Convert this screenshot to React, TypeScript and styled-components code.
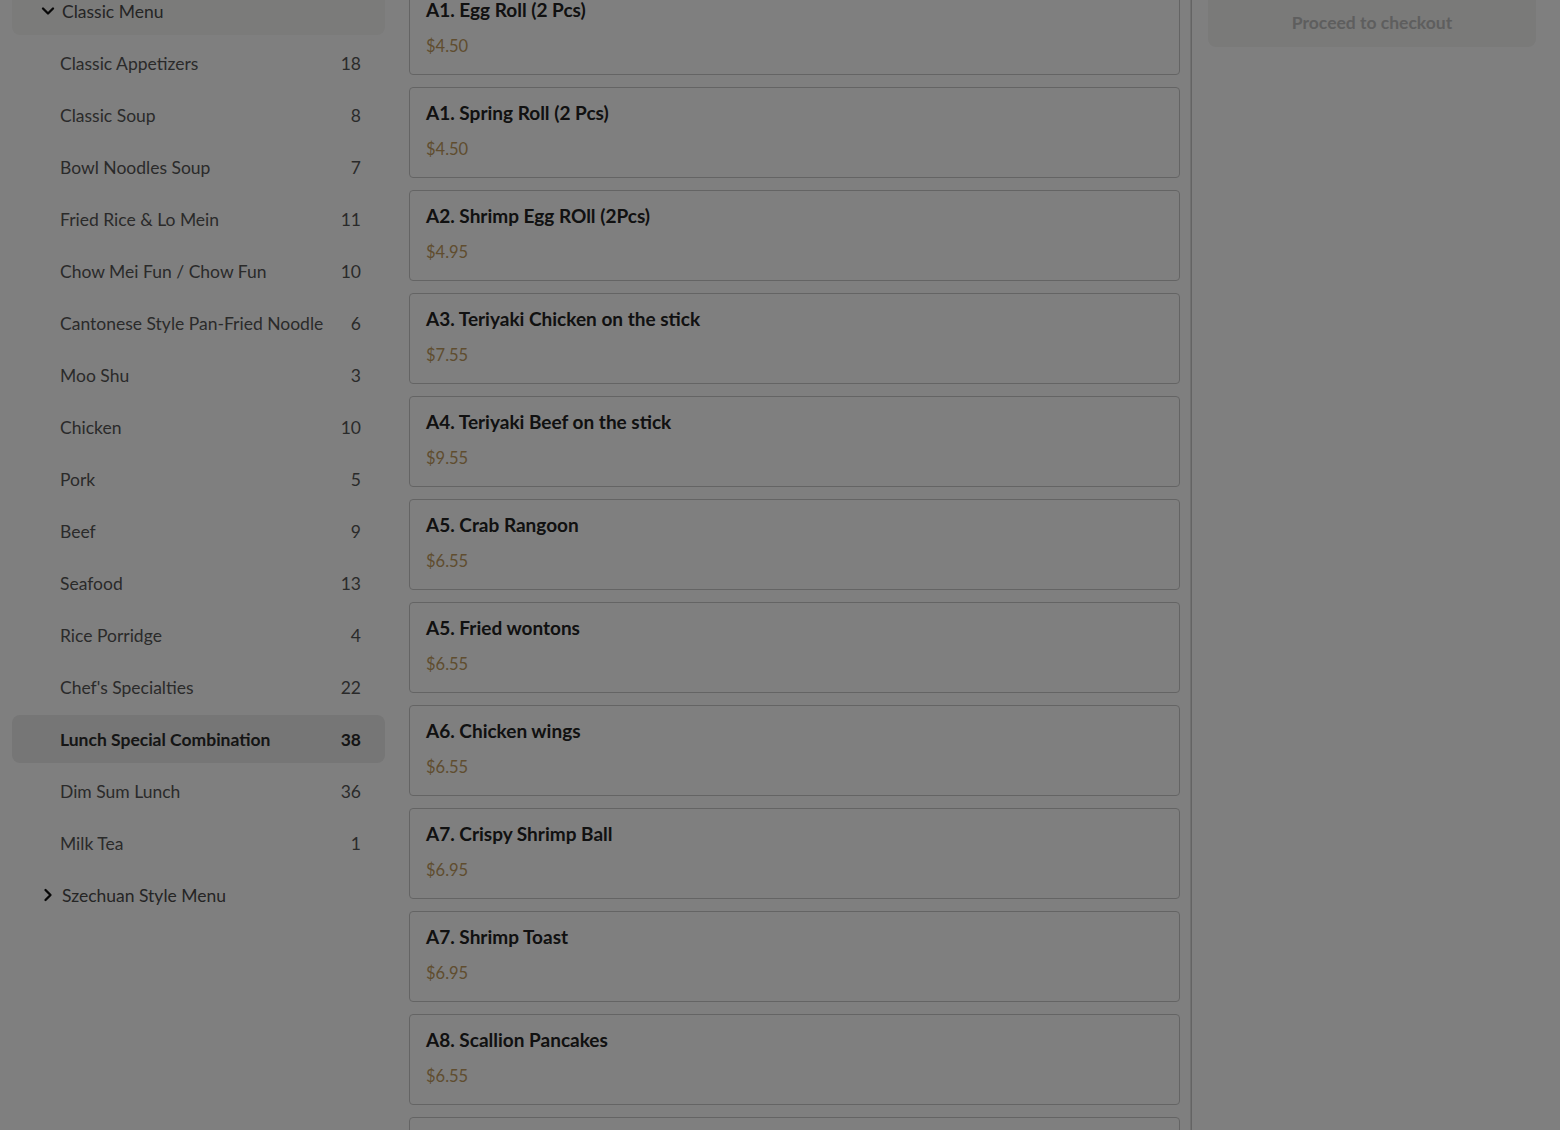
import styled, { createGlobalStyle } from "styled-components";
import { ChevronDown, ChevronRight } from "lucide-react";

const GlobalStyle = createGlobalStyle`
  html, body {
    margin: 0;
    padding: 0;
    background: #fff;
    overflow: hidden;
  }
  body {
    font-family: Lato, "Noto Sans", sans-serif;
    color: #444;
  }
`;

const Layout = styled.div`
  display: grid;
  grid-template-columns: 397px 795px 1fr;
  height: 1130px;
  overflow: hidden;
`;

const Sidebar = styled.nav`
  padding: 0 12px;
  margin-top: -13px;
`;

const GroupHeader = styled.div<{ $open?: boolean }>`
  display: flex;
  align-items: center;
  gap: 4px;
  height: 48px;
  padding-left: 26px;
  margin: 4px 0;
  border-radius: 8px;
  background: ${(p) => (p.$open ? "#f6f6f5" : "transparent")};
  color: #4a4a4a;
  font-size: 17.5px;
  &:first-child {
    margin-top: 0;
  }
  svg {
    color: #111;
  }
`;

const CatList = styled.ul`
  list-style: none;
  margin: 0;
  padding: 0;
  display: flex;
  flex-direction: column;
  gap: 4px;
`;

const Cat = styled.li<{ $active?: boolean }>`
  display: flex;
  justify-content: space-between;
  align-items: center;
  height: 48px;
  padding: 0 24px 0 48px;
  border-radius: 8px;
  font-size: 17.5px;
  background: ${(p) => (p.$active ? "#ececec" : "transparent")};
  color: ${(p) => (p.$active ? "#2a2a2a" : "#555")};
  font-weight: ${(p) => (p.$active ? 700 : 400)};
`;

const Middle = styled.main`
  border-right: 1px solid #c8c8c8;
  padding: 0 12px;
  box-shadow: inset -7px 0 0 -6px #e2e2e2;
`;

const Cards = styled.div`
  display: flex;
  flex-direction: column;
  gap: 12px;
  margin-top: -16px;
  width: 771px;
`;

const Card = styled.div`
  height: 91px;
  box-sizing: border-box;
  border: 1px solid #c9c9c9;
  border-radius: 4px;
  padding: 12px 16px;
  display: flex;
  flex-direction: column;
  gap: 13px;
`;

const ItemName = styled.h3`
  margin: 0;
  font-size: 19px;
  font-weight: 700;
  color: #222;
  line-height: 25px;
`;

const Price = styled.span`
  font-size: 16.5px;
  color: #c09a5e;
  line-height: 22px;
`;

const Right = styled.aside`
  padding: 0 24px 0 16px;
`;

const Checkout = styled.button`
  width: 100%;
  height: 58px;
  margin-top: -11px;
  padding-top: 10px;
  border: none;
  border-radius: 8px;
  background: #f4f4f3;
  color: #bdbdbd;
  font-family: inherit;
  font-size: 17.5px;
  font-weight: 700;
`;

const Overlay = styled.div`
  position: fixed;
  inset: 0;
  background: rgba(0, 0, 0, 0.5);
`;

const categories: [string, number][] = [
  ["Classic Appetizers", 18],
  ["Classic Soup", 8],
  ["Bowl Noodles Soup", 7],
  ["Fried Rice & Lo Mein", 11],
  ["Chow Mei Fun / Chow Fun", 10],
  ["Cantonese Style Pan-Fried Noodle", 6],
  ["Moo Shu", 3],
  ["Chicken", 10],
  ["Pork", 5],
  ["Beef", 9],
  ["Seafood", 13],
  ["Rice Porridge", 4],
  ["Chef's Specialties", 22],
  ["Lunch Special Combination", 38],
  ["Dim Sum Lunch", 36],
  ["Milk Tea", 1],
];

const items: [string, string][] = [
  ["A1. Egg Roll (2 Pcs)", "$4.50"],
  ["A1. Spring Roll (2 Pcs)", "$4.50"],
  ["A2. Shrimp Egg ROll (2Pcs)", "$4.95"],
  ["A3. Teriyaki Chicken on the stick", "$7.55"],
  ["A4. Teriyaki Beef on the stick", "$9.55"],
  ["A5. Crab Rangoon", "$6.55"],
  ["A5. Fried wontons", "$6.55"],
  ["A6. Chicken wings", "$6.55"],
  ["A7. Crispy Shrimp Ball", "$6.95"],
  ["A7. Shrimp Toast", "$6.95"],
  ["A8. Scallion Pancakes", "$6.55"],
  ["A9. Fried Dumplings", "$7.95"],
];

export default function App() {
  return (
    <>
      <GlobalStyle />
      <Layout>
        <Sidebar>
          <GroupHeader $open>
            <ChevronDown size={20} strokeWidth={2.8} />
            Classic Menu
          </GroupHeader>
          <CatList>
            {categories.map(([name, count]) => (
              <Cat key={name} $active={name === "Lunch Special Combination"}>
                <span>{name}</span>
                <span>{count}</span>
              </Cat>
            ))}
          </CatList>
          <GroupHeader>
            <ChevronRight size={20} strokeWidth={2.8} />
            Szechuan Style Menu
          </GroupHeader>
        </Sidebar>
        <Middle>
          <Cards>
            {items.map(([name, price]) => (
              <Card key={name}>
                <ItemName>{name}</ItemName>
                <Price>{price}</Price>
              </Card>
            ))}
          </Cards>
        </Middle>
        <Right>
          <Checkout>Proceed to checkout</Checkout>
        </Right>
      </Layout>
      <Overlay />
    </>
  );
}
